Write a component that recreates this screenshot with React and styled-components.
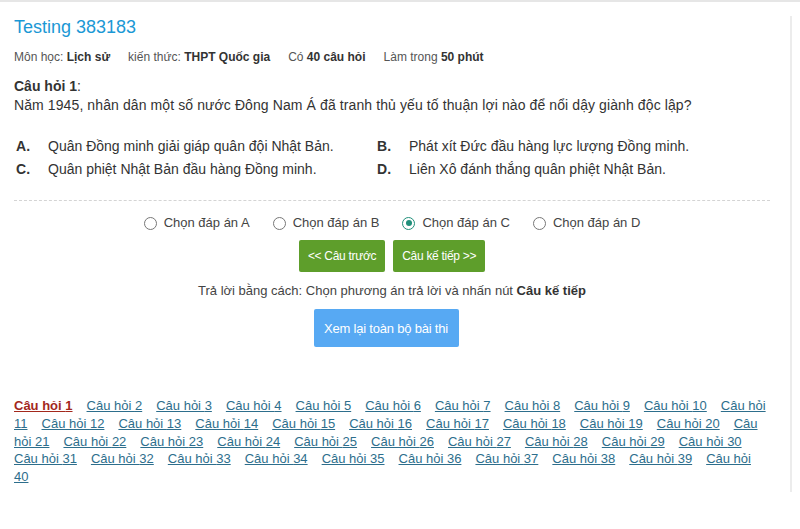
import styled, { createGlobalStyle } from "styled-components";
import { Fragment, useState } from "react";

const GlobalStyle = createGlobalStyle`
    html, body {
        margin: 0;
        padding: 0;
        background: #fff;
    }
    body {
        font-family: "Liberation Sans", Arial, sans-serif;
        color: #333;
    }
`;

const OPTIONS = [
    { key: "A", text: "Quân Đồng minh giải giáp quân đội Nhật Bản." },
    { key: "B", text: "Phát xít Đức đầu hàng lực lượng Đồng minh." },
    { key: "C", text: "Quân phiệt Nhật Bản đầu hàng Đồng minh." },
    { key: "D", text: "Liên Xô đánh thắng quân phiệt Nhật Bản." },
];

const App = () => {
    const [picked, setPicked] = useState("C");
    const questions = Array.from({ length: 40 }, (_, i) => i + 1);

    return (
        <Page>
            <GlobalStyle />
            <Main>
                <Title>Testing 383183</Title>
                <Meta>
                    <span>Môn học: <b>Lịch sử</b></span>
                    <span>kiến thức: <b>THPT Quốc gia</b></span>
                    <span>Có <b>40 câu hỏi</b></span>
                    <span>Làm trong <b>50 phút</b></span>
                </Meta>
                <Question>
                    <p className="label"><b>Câu hỏi 1</b>:</p>
                    <p>Năm 1945, nhân dân một số nước Đông Nam Á đã tranh thủ yếu tố thuận lợi nào để nổi dậy giành độc lập?</p>
                </Question>
                <Options>
                    {OPTIONS.map((o) => (
                        <Option key={o.key}>
                            <b>{o.key}.</b>
                            <span>{o.text}</span>
                        </Option>
                    ))}
                </Options>
                <Divider />
                <Radios>
                    {OPTIONS.map((o) => (
                        <RadioLabel key={o.key} onClick={() => setPicked(o.key)}>
                            <Circle $checked={picked === o.key} />
                            Chọn đáp án {o.key}
                        </RadioLabel>
                    ))}
                </Radios>
                <NavButtons>
                    <GreenButton>&lt;&lt; Câu trước</GreenButton>
                    <GreenButton>Câu kế tiếp &gt;&gt;</GreenButton>
                </NavButtons>
                <Hint>Trả lời bằng cách: Chọn phương án trả lời và nhấn nút <b>Câu kế tiếp</b></Hint>
                <Review>
                    <BlueButton>Xem lại toàn bộ bài thi</BlueButton>
                </Review>
                <Links>
                    {questions.map((n) => (
                        <Fragment key={n}>
                            <QLink href="#" $current={n === 1}>Câu hỏi {n}</QLink>{" "}
                        </Fragment>
                    ))}
                </Links>
            </Main>
            <Side />
        </Page>
    );
};

const Page = styled.div`
    display: flex;
    height: 529px;
    border-top: 2px solid #e6e6e6;
    box-sizing: border-box;
`;

const Main = styled.div`
    width: 756px;
    padding: 0 20px 0 14px;
`;

const Side = styled.div`
    margin-top: 14px;
    height: 476px;
    width: 2px;
    background: #ececec;
`;

const Title = styled.h1`
    margin: 14px 0 0;
    font-size: 18px;
    font-weight: normal;
    color: #1b98d5;
    line-height: 22px;
`;

const Meta = styled.div`
    margin-top: 11px;
    display: flex;
    gap: 18px;
    font-size: 12px;
    color: #555;
    line-height: 16px;
    b {
        color: #333;
    }
`;

const Question = styled.div`
    margin-top: 12px;
    font-size: 14px;
    line-height: 18.5px;
    p {
        margin: 0;
    }
    p:last-child {
        letter-spacing: 0.1px;
    }
`;

const Options = styled.div`
    margin-top: 23px;
    display: grid;
    grid-template-columns: 361px 1fr;
    row-gap: 4px;
    font-size: 14px;
    line-height: 19px;
`;

const Option = styled.div`
    display: flex;
    padding-left: 2px;
    b {
        width: 32px;
        flex-shrink: 0;
    }
`;

const Divider = styled.div`
    margin-top: 21px;
    border-top: 1px dashed #d4d4d4;
`;

const Radios = styled.div`
    margin-top: 13px;
    display: flex;
    justify-content: center;
    gap: 23px;
    font-size: 13px;
    line-height: 18px;
    color: #444;
`;

const RadioLabel = styled.label`
    display: flex;
    align-items: center;
    gap: 7px;
    cursor: pointer;
`;

const Circle = styled.span`
    width: 11px;
    height: 11px;
    border-radius: 50%;
    border: 1.5px solid ${(p) => (p.$checked ? "#1f8f7a" : "#777")};
    position: relative;
    &::after {
        content: "";
        display: ${(p) => (p.$checked ? "block" : "none")};
        position: absolute;
        inset: 2.5px;
        border-radius: 50%;
        background: #1f8f7a;
    }
`;

const NavButtons = styled.div`
    margin-top: 8px;
    display: flex;
    justify-content: center;
    gap: 8px;
`;

const GreenButton = styled.button`
    height: 32px;
    padding: 0 9px;
    border: none;
    border-radius: 2px;
    background: #5e9e2b;
    color: #fff;
    font-family: "Liberation Sans", Arial, sans-serif;
    font-size: 12px;
    letter-spacing: -0.3px;
    cursor: pointer;
`;

const Hint = styled.div`
    margin-top: 10px;
    text-align: center;
    font-size: 13px;
    line-height: 17px;
    color: #444;
    b {
        color: #333;
    }
`;

const Review = styled.div`
    margin-top: 10px;
    padding-right: 12px;
    display: flex;
    justify-content: center;
`;

const BlueButton = styled.button`
    width: 145px;
    height: 38px;
    border: none;
    border-radius: 2px;
    background: #57a9f3;
    color: #fff;
    font-family: "Liberation Sans", Arial, sans-serif;
    font-size: 13px;
    letter-spacing: -0.2px;
    cursor: pointer;
`;

const Links = styled.div`
    margin-top: 50px;
    font-size: 13px;
    line-height: 17.8px;
`;

const QLink = styled.a`
    margin-right: 10.4px;
    color: ${(p) => (p.$current ? "#a3281c" : "#2d6e8c")};
    font-weight: ${(p) => (p.$current ? "bold" : "normal")};
    text-decoration: underline;
`;

export default App;
